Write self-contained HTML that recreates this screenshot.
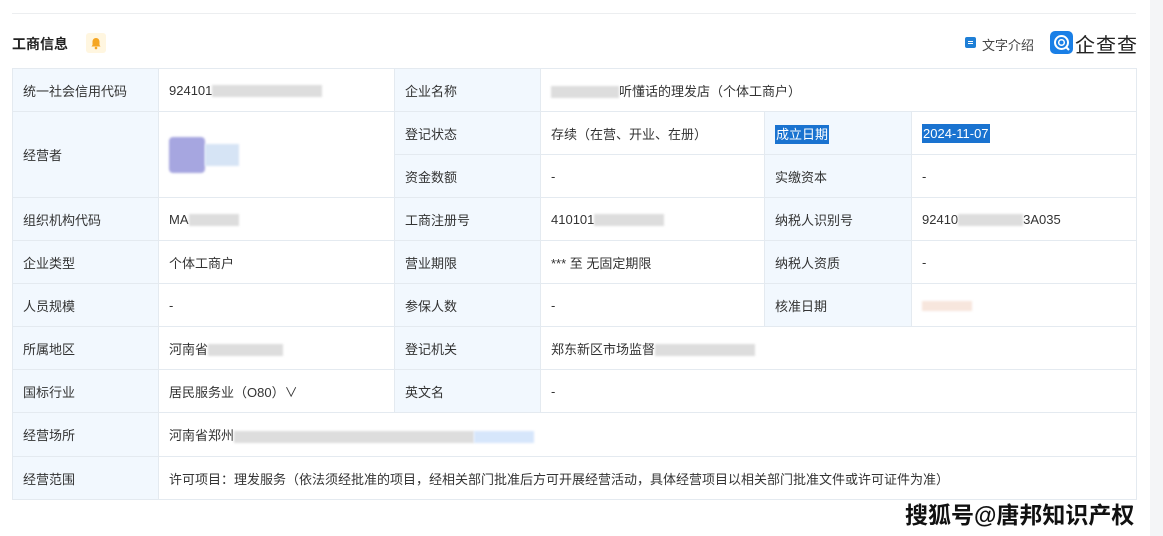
<!DOCTYPE html>
<html><head><meta charset="utf-8"><style>
body{margin:0;width:1163px;height:536px;background:#fff;font-family:"Liberation Sans","Noto Sans CJK SC",sans-serif;font-size:13px;color:#333;position:relative;overflow:hidden}
.strip{position:absolute;left:1150px;top:0;width:13px;height:536px;background:#f4f5f7}
.topline{position:absolute;left:12px;top:13px;width:1124px;height:1px;background:#eceef0}
.title{position:absolute;left:12px;top:34px;font-size:14px;font-weight:bold;color:#222}
.bell{position:absolute;left:86px;top:33px;width:20px;height:20px;background:#fff6e0;border-radius:3px}
table{position:absolute;left:12px;top:68px;border-collapse:collapse;table-layout:fixed}
td{border:1px solid #e4eaf0;height:42px;padding:0 0 0 10px;vertical-align:middle;white-space:nowrap;overflow:hidden}
td.l{background:#f2f8fe;color:#333}
tr.t td{height:43px}
.blur{display:inline-block;height:12px;background:#ddd;vertical-align:middle;filter:blur(1px)}
.sel{background:#1a73d0;color:#fff;padding:2px 1px}
.wm{position:absolute;left:905px;top:496px;font-size:23px;font-weight:bold;color:#111;text-shadow:0 0 2px #fff,0 0 2px #fff}
</style></head><body>
<div class="strip"></div>
<div class="topline"></div>
<div class="title">工商信息</div>
<div class="bell"><svg width="20" height="20"><path d="M10 5c-2.5 0-3.5 2-3.5 4v3l-1 1.5h9L13.5 12V9c0-2-1-4-3.5-4z" fill="#f5a623"/><circle cx="10" cy="15" r="1.3" fill="#f5a623"/></svg></div>
<div style="position:absolute;left:965px;top:37px;width:11px;height:11px;background:#1f7fd6;border-radius:2px"><div style="position:absolute;left:3px;top:4px;width:5px;height:1px;background:#fff"></div><div style="position:absolute;left:3px;top:6px;width:5px;height:1px;background:#fff"></div></div>
<div style="position:absolute;left:982px;top:35px;font-size:13px;color:#444">文字介绍</div>
<div style="position:absolute;left:1050px;top:31px;width:23px;height:23px;background:#1a7fe6;border-radius:5px"><svg width="23" height="23"><circle cx="11.5" cy="11.5" r="6.5" fill="none" stroke="#fff" stroke-width="2"/><circle cx="11.5" cy="11.5" r="2.8" fill="none" stroke="#fff" stroke-width="1.5"/><path d="M16 16l3 3" stroke="#fff" stroke-width="2"/></svg></div>
<div style="position:absolute;left:1075px;top:29px;font-size:20px;color:#222;letter-spacing:1px">企查查</div>
<table>
<colgroup><col style="width:146px"><col style="width:236px"><col style="width:146px"><col style="width:224px"><col style="width:147px"><col style="width:225px"></colgroup>
<tr><td class="l">统一社会信用代码</td><td>924101<span class="blur" style="width:110px"></span></td><td class="l">企业名称</td><td colspan="3"><span class="blur" style="width:68px"></span>听懂话的理发店（个体工商户）</td></tr>
<tr><td class="l" rowspan="2">经营者</td><td rowspan="2"><span style="display:inline-block;width:36px;height:36px;background:#a6a6e0;border-radius:4px;vertical-align:middle;filter:blur(1px)"></span><span class="blur" style="width:34px;height:22px;background:#d6e4f5"></span></td><td class="l">登记状态</td><td>存续（在营、开业、在册）</td><td class="l"><span class="sel">成立日期</span></td><td><span class="sel">2024-11-07</span></td></tr>
<tr><td class="l">资金数额</td><td>-</td><td class="l">实缴资本</td><td>-</td></tr>
<tr><td class="l">组织机构代码</td><td>MA<span class="blur" style="width:50px"></span></td><td class="l">工商注册号</td><td>410101<span class="blur" style="width:70px"></span></td><td class="l">纳税人识别号</td><td>92410<span class="blur" style="width:65px"></span>3A035</td></tr>
<tr><td class="l">企业类型</td><td>个体工商户</td><td class="l">营业期限</td><td>*** 至 无固定期限</td><td class="l">纳税人资质</td><td>-</td></tr>
<tr><td class="l">人员规模</td><td>-</td><td class="l">参保人数</td><td>-</td><td class="l">核准日期</td><td><span class="blur" style="width:50px;background:#f7e6dd;height:10px"></span></td></tr>
<tr><td class="l">所属地区</td><td>河南省<span class="blur" style="width:75px"></span></td><td class="l">登记机关</td><td colspan="3">郑东新区市场监督<span class="blur" style="width:100px"></span></td></tr>
<tr><td class="l">国标行业</td><td>居民服务业（O80）∨</td><td class="l">英文名</td><td colspan="3">-</td></tr>
<tr class="t"><td class="l">经营场所</td><td colspan="5">河南省郑州<span class="blur" style="width:240px"></span><span class="blur" style="width:60px;background:#d6e6fb"></span></td></tr>
<tr><td class="l">经营范围</td><td colspan="5">许可项目：理发服务（依法须经批准的项目，经相关部门批准后方可开展经营活动，具体经营项目以相关部门批准文件或许可证件为准）</td></tr>
</table>
<div class="wm">搜狐号@唐邦知识产权</div>
</body></html>
